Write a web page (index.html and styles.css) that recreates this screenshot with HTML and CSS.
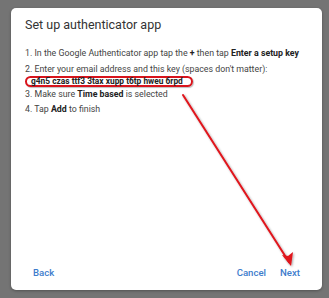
FILE: index.html
```html
<!DOCTYPE html>
<html lang="en">
<head>
    <meta charset="UTF-8">
    <meta name="viewport" content="width=device-width, initial-scale=1.0">
    <title>Set up authenticator app</title>
    <link rel="stylesheet" href="styles.css">
</head>
<body>
    <div class="dialog">
        <h1>Set up authenticator app</h1>
        <ol class="steps">
            <li>1. In the Google Authenticator app tap the <b>+</b> then tap <b>Enter a setup key</b></li>
            <li class="with-key">2. Enter your email address and this key (spaces don't matter):<br>
                <span class="key">g4n5 czas ttf3 3tax xupp t6tp hweu 6rpd</span>
            </li>
            <li>3. Make sure <b>Time based</b> is selected</li>
            <li>4. Tap <b>Add</b> to finish</li>
        </ol>
        <div class="actions">
            <a href="#" class="btn">Back</a>
            <div class="right">
                <a href="#" class="btn">Cancel</a>
                <a href="#" class="btn">Next</a>
            </div>
        </div>

        <!-- red arrow pointing at Next -->
        <svg class="arrow" width="329" height="298" viewBox="0 0 329 298">
            <defs>
                <filter id="shadow" x="-20%" y="-20%" width="140%" height="140%">
                    <feDropShadow dx="1" dy="1" stdDeviation="0.8" flood-color="#000" flood-opacity="0.35"/>
                </filter>
            </defs>
            <g filter="url(#shadow)" stroke="#e0141c" stroke-width="2" fill="none" stroke-linecap="round">
                <line x1="183" y1="95" x2="289" y2="262"/>
            </g>
            <polygon filter="url(#shadow)" points="291,266 282,255 288,256 293,252" fill="#e0141c"/>
        </svg>
    </div>
</body>
</html>
```

FILE: styles.css
```css
body {
    margin: 0;
    padding: 8px 7px 8px 11px;
    background-color: #747474;
    font-family: Roboto, "Liberation Sans", Arial, sans-serif;
    height: 298px;
    box-sizing: border-box;
}
.dialog {
    position: relative;
    background-color: #fff;
    border-radius: 5px;
    height: 282px;
    width: 311px;
    box-sizing: border-box;
    padding: 9px 14px 12px 14px;
    display: flex;
    flex-direction: column;
    box-shadow: 0 1px 3px rgba(0, 0, 0, 0.3);
}
.dialog h1 {
    font-size: 12.5px;
    font-weight: 400;
    color: #333;
    margin: 0 0 14px 0;
    line-height: 16px;
}
.steps {
    list-style: none;
    margin: 0;
    padding: 0;
    font-size: 8.8px;
    color: #444;
}
.steps li {
    line-height: 12px;
    margin-bottom: 3.5px;
    white-space: nowrap;
}
.steps li.with-key {
    margin-bottom: 1px;
}
.steps b {
    color: #222;
}
.key {
    display: inline-block;
    font-weight: 700;
    font-size: 8.4px;
    color: #222;
    border: 2px solid #d8141c;
    border-radius: 7px;
    padding: 0 8px 0 4px;
    line-height: 7px;
    margin: 0;
    box-shadow: 1px 1px 1px rgba(0, 0, 0, 0.25);
}
.actions {
    margin-top: auto;
    display: flex;
    justify-content: space-between;
    align-items: center;
    padding: 0 8px;
}
.right {
    display: flex;
    gap: 14px;
}
.btn {
    color: #3d7ccc;
    text-decoration: none;
    font-size: 9.6px;
    font-weight: 500;
}
.arrow {
    position: absolute;
    left: -11px;
    top: -8px;
    pointer-events: none;
}
```
